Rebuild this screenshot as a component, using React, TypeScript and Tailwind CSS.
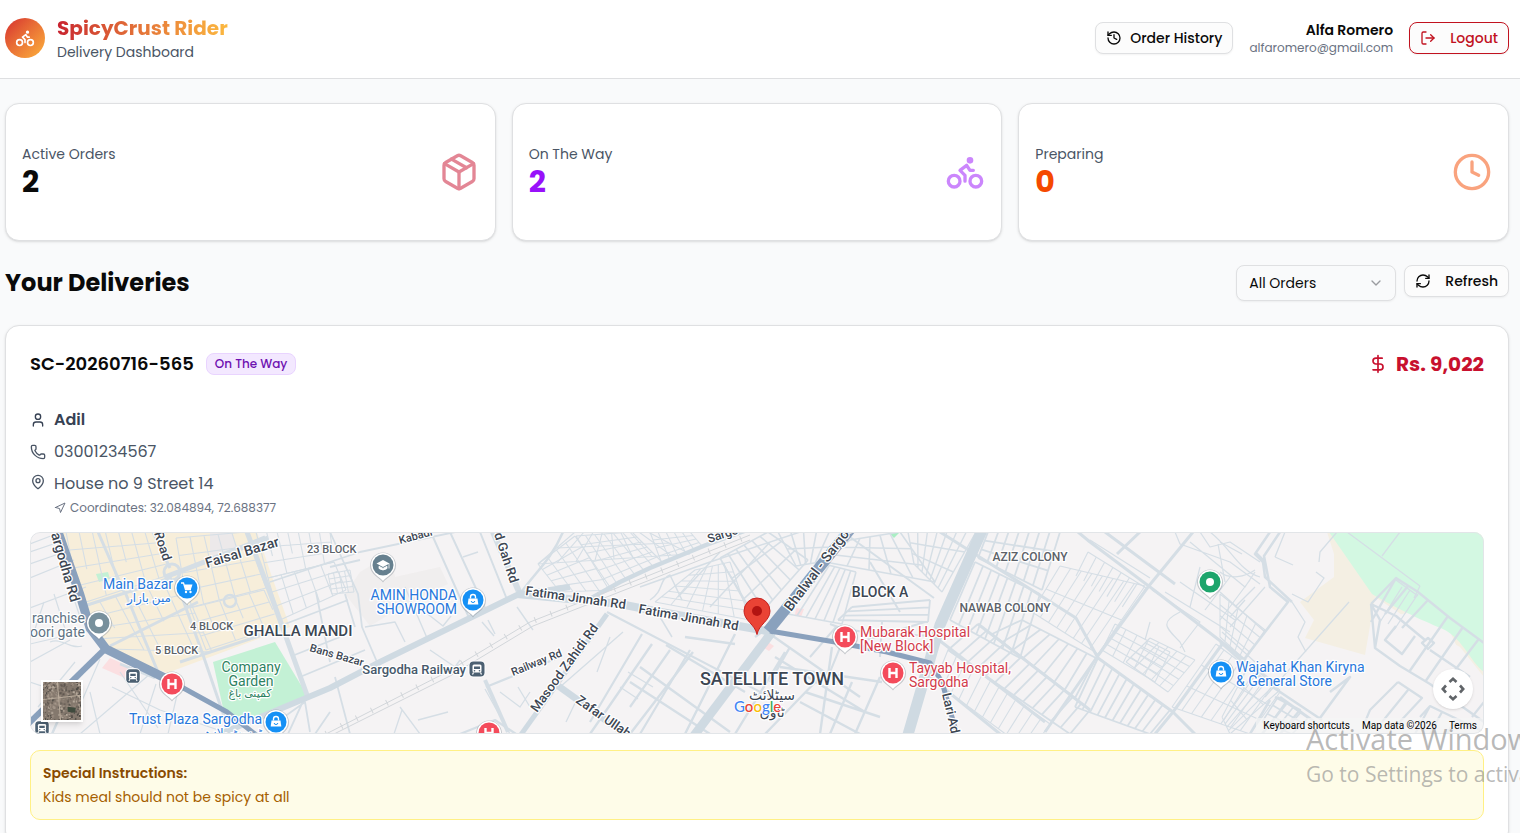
import React from "react";
import {
  Bike,
  ChevronDown,
  Clock,
  DollarSign,
  History,
  LogOut,
  MapPin,
  Navigation,
  Package,
  Phone,
  RefreshCw,
  User,
} from "lucide-react";

type Pt = [number, number];

const mix = (a: Pt, b: Pt, t: number): Pt => [a[0] + (b[0] - a[0]) * t, a[1] + (b[1] - a[1]) * t];

/* A block of streets: `across` lines join a-b to d-c, `along` lines join a-d to b-c. */
function Streets({ q, across, along, w = 1.1, skip = 0 }: { q: [Pt, Pt, Pt, Pt]; across: number; along: number; w?: number; skip?: number }) {
  const [a, b, c, d] = q;
  let path = "";
  for (let i = 0; i <= across; i++) {
    const t = i / across;
    const cut = skip && i % skip === 1 ? 0.55 : 1;
    const s = mix(a, b, t);
    const e = mix(s, mix(d, c, t), cut);
    path += `M${s[0].toFixed(1)} ${s[1].toFixed(1)}L${e[0].toFixed(1)} ${e[1].toFixed(1)}`;
  }
  for (let i = 0; i <= along; i++) {
    const t = along ? i / along : 0;
    const s = mix(a, d, t);
    const e = mix(b, c, t);
    path += `M${s[0].toFixed(1)} ${s[1].toFixed(1)}L${e[0].toFixed(1)} ${e[1].toFixed(1)}`;
  }
  return <path d={path} strokeWidth={w} />;
}

function Label({
  x,
  y,
  size = 14,
  fill = "#3c4653",
  weight = 400,
  rotate = 0,
  anchor = "start",
  children,
}: {
  x: number;
  y: number;
  size?: number;
  fill?: string;
  weight?: number;
  rotate?: number;
  anchor?: "start" | "middle" | "end";
  children: React.ReactNode;
}) {
  return (
    <text
      x={x}
      y={y}
      fontSize={size}
      fontWeight={weight}
      fill={fill}
      textAnchor={anchor}
      transform={rotate ? `rotate(${rotate} ${x} ${y})` : undefined}
      stroke="#ffffff"
      strokeWidth={2.5}
      strokeLinejoin="round"
      paintOrder="stroke"
    >
      {children}
    </text>
  );
}

function Pin({ x, y, color, children }: { x: number; y: number; color: string; children?: React.ReactNode }) {
  return (
    <g transform={`translate(${x} ${y})`}>
      <path d="M0 17.500C-3 13-13 9.500-13 .5A13 13 0 0 1 13 .5C13 9.500 3 13 0 17.500Z" fill="#7d8790" opacity="0.4" />
      <path d="M0 16C-3 12-12 8.500-12 0A12 12 0 0 1 12 0C12 8.500 3 12 0 16Z" fill="#ffffff" />
      <circle r="10.500" fill={color} />
      {children}
    </g>
  );
}

const bag = (
  <g>
    <path d="M-4.500-1.500h9l.8 6h-10.600z" fill="#fff" />
    <path d="M-2.500-1.500v-1.500a2.500 2.500 0 0 1 5 0v1.500" fill="none" stroke="#fff" strokeWidth="1.400" />
    <path d="M-1.800 1a1.800 1.500 0 0 0 3.600 0" fill="none" stroke="#1590f5" strokeWidth="1" />
  </g>
);
const hospital = <path d="M-3.500-5v10M3.500-5v10M-3.500 0h7" stroke="#fff" strokeWidth="2.400" fill="none" />;

function Station({ x, y, s = 1 }: { x: number; y: number; s?: number }) {
  return (
    <g transform={`translate(${x} ${y}) scale(${s})`}>
      <rect x="-8.500" y="-8.500" width="17" height="17" rx="5" fill="#fff" />
      <rect x="-7.500" y="-7.500" width="15" height="15" rx="4" fill="#4c6072" />
      <rect x="-4.500" y="-4.500" width="9" height="8" rx="1.500" fill="#fff" />
      <path d="M-3-2.500h6v2.500h-6z" fill="#4c6072" />
      <circle cx="-2.500" cy="1.800" r=".8" fill="#4c6072" />
      <circle cx="2.500" cy="1.800" r=".8" fill="#4c6072" />
      <path d="M-3.500 3.500l-1 2M3.500 3.500l1 2" stroke="#fff" strokeWidth="1.200" />
    </g>
  );
}

function CityMap() {
  return (
    <svg
      viewBox="0 0 1454 202"
      preserveAspectRatio="xMidYMid slice"
      className="block h-full w-full font-[Roboto,'DejaVu_Sans',sans-serif]"
      role="img"
      aria-label="Delivery location map"
    >
      <rect width="1454" height="202" fill="#f5f3f4" />

      {/* land use */}
      <path d="M30 0H227L242 45 260 95 180 125 137 141 74 116 57 75 42 30Z" fill="#f7eeda" />
      <path d="M180 0h22l8 24-18 6-12-8z" fill="#ece9ea" />
      <path d="M183 130L245 110 277 163 230 183 208 192 193 176Z" fill="#c3f1d5" />
      <path d="M66 42l12-2 2 7-11 3z" fill="#c3f1d5" />
      <path d="M80 126L103 136 97 147 72 136Z" fill="#fbdfe1" />
      <path d="M330 40L360 22 365 45 410 35 418 52 380 70 340 94 315 62Z" fill="#f0eeee" />
      <path d="M766 76l8 1-3 8-6-2zM738 110l6 4-5 5-5-3z" fill="#fbdfe1" />
      <path d="M858 0h12l-6 6z" fill="#aaeec4" />
      <path d="M1297 0H1454V145L1430 115 1380 88 1345 65 1335 123 1275 106 1284 88 1270 70 1304 45 1304 22Z" fill="#f4efe3" />
      <path d="M1352 92a40 30 0 0 1 70 12l20 44-50 4-40-30z" fill="#f5f3f4" />
      <path d="M1299 0H1454V140C1440 130 1432 103 1408 95C1385 85 1370 78 1342 62Z" fill="#d3f8e2" />

      <g fill="none" stroke="#d5dee5" strokeLinecap="butt" strokeLinejoin="round">
        {/* western edge */}
        <path d="M0 20L35 8M0 32L40 18M0 46L44 28M0 12L26 2M0 76L56 55M24 62l12 38M40 55l10 30M14 70l-10 30M0 112L60 98M20 110c12-5 20 8 32 4M8 175L45 130M70 127L48 178M0 130L40 108M50 202L120 142M82 155L130 178 200 202M110 202L126 152M138 202L150 150M60 160L70 202M90 140L128 196M0 150L30 160" strokeWidth="1.200" />
        <path d="M74 116L45 150 22 202M90 132l35 14" strokeWidth="2.500" />
        {/* bazaar blocks */}
        <Streets q={[[36, 0], [128, 0], [142, 42], [50, 72]]} across={7} along={4} skip={3} />
        <Streets q={[[54, 75], [148, 42], [182, 120], [80, 117]]} across={6} along={4} skip={3} />
        <Streets q={[[146, 6], [216, 0], [236, 56], [158, 76]]} across={5} along={4} />
        <Streets q={[[160, 76], [234, 58], [250, 94], [176, 118]]} across={5} along={3} skip={2} />
        <path d="M54 74L142 46M95 60L130 145M68 0L95 62M123 0L140 36M160 35L235 5M145 46L172 120 196 190M80 114L168 70M150 130L235 102" strokeWidth="3" />
        <path d="M135 45L238 6" strokeWidth="5" />
        <circle cx="142" cy="40" r="8" strokeWidth="3" />
        <circle cx="200" cy="69" r="6" strokeWidth="2.500" />
        <path d="M217 0L242 66 277 163" strokeWidth="5" />
        {/* 23 block */}
        <Streets q={[[226, 0], [300, 0], [304, 30], [238, 46]]} across={7} along={3} skip={2} />
        <Streets q={[[238, 46], [304, 30], [316, 58], [250, 88]]} across={5} along={3} />
        <path d="M240 50L330 20 425 0M255 92L318 68M262 124L310 105M270 145L335 118M275 165L258 202M300 180L285 202M305 145L320 202M240 195l35-25 5 30M300 0L328 62 332 95 347 130M286 60L300 130M300 35L330 28M315 62L325 95" strokeWidth="1.800" />
        <Streets q={[[298, 42], [320, 38], [324, 60], [302, 62]]} across={4} along={4} w={1} />
        {/* centre north */}
        <path d="M433 25l15-5M375 55L397 106M452 90l12 14M458 88l7 14M487 75L503 98M335 95l30-5 10 20M400 118L425 135 430 128M385 72l28 22 8-10" strokeWidth="1.400" />
        <path d="M403 5L440 88M420 0L455 76M450 0L478 70" strokeWidth="2" />
        <path d="M463 0L490 62" strokeWidth="6" />
        <path d="M490 62C505 40 520 30 533 0" strokeWidth="2.500" />
        <Streets q={[[545, 0], [618, 0], [660, 22], [508, 32]]} across={8} along={2} />
        <Streets q={[[508, 32], [545, 4], [582, 58], [530, 60]]} across={4} along={5} />
        <Streets q={[[546, 4], [602, 0], [632, 30], [578, 56]]} across={6} along={6} />
        <Streets q={[[620, 0], [660, 0], [672, 14], [632, 32]]} across={5} along={4} />
        {/* south centre */}
        <path d="M455 157L480 202M370 175L390 202M388 188l30-8M372 178l-8 24M470 160l20 15 10-15M488 155l12 20M593 100L530 155M598 140l25 15M590 155l18 12M548 165L536 190M567 140L580 105" strokeWidth="1.300" />
        <path d="M456 155L530 125M430 202L465 188 486 202M577 80L740 165M612 102L560 190M640 118L600 175M660 118L610 202" strokeWidth="2.200" />
        <path d="M455 148L478 200" strokeWidth="4" />
        {/* satellite town */}
        <path d="M610 135L700 200M636 113L715 160M655 105L705 112M600 150L680 202M663 120L600 202M705 102L655 202M725 105L760 80M740 102L830 165M755 120L705 202M750 135L852 150M760 115L740 150M802 115L790 202M745 125L835 180M795 140L735 202M822 150L800 202M850 145L825 202M775 160L850 185M770 170L830 202M622 112L560 202" strokeWidth="2.400" />
        <Streets q={[[665, 38], [700, 30], [720, 88], [625, 70]]} across={6} along={6} />
        <path d="M610 55L680 30 770 0M620 68c15-10 8-20 20-25l12 25M630 85l12 20M648 65L690 20M680 75L740 10M692 30L725 85" strokeWidth="1.500" />
        <Streets q={[[690, 26], [738, 0], [778, 28], [725, 88]]} across={6} along={3} w={1.6} />
        <Streets q={[[748, 0], [812, 0], [790, 30], [766, 34]]} across={5} along={2} w={1.6} />
        {/* block a */}
        <Streets q={[[820, 8], [870, 0], [905, 50], [795, 30]]} across={5} along={3} w={1.6} />
        <Streets q={[[794, 32], [826, 40], [812, 92], [758, 82]]} across={6} along={1} w={1.6} />
        <Streets q={[[878, 0], [946, 0], [912, 60], [884, 32]]} across={7} along={3} w={1.4} />
        <Streets q={[[822, 75], [900, 68], [898, 90], [808, 88]]} across={1} along={3} w={1.8} />
        <path d="M820 5L904 66M840 30L870 80M806 95L780 125M800 92C830 105 880 100 906 105M830 110L895 90M850 125L852 90M818 96L800 140" strokeWidth="2" />
        {/* aziz and nawab colony */}
        <Streets q={[[958, 0], [1030, 0], [1012, 58], [948, 26]]} across={7} along={3} w={1.8} />
        <Streets q={[[945, 30], [1010, 62], [990, 126], [920, 88]]} across={8} along={1} w={1.8} />
        <Streets q={[[1030, 34], [1115, 54], [1068, 122], [1002, 80]]} across={8} along={2} />
        <Streets q={[[1058, 20], [1116, 56], [1100, 80], [1046, 44]]} across={7} along={0} />
        <Streets q={[[948, 92], [1060, 178], [1040, 202], [918, 118]]} across={13} along={1} w={1.8} />
        <Streets q={[[992, 88], [1066, 126], [1045, 166], [962, 102]]} across={8} along={1} w={1.8} />
        <Streets q={[[918, 118], [1020, 192], [1000, 220], [905, 150]]} across={12} along={1} />
        <Streets q={[[1068, 126], [1140, 178], [1120, 202], [1045, 175]]} across={10} along={1} w={1.8} />
        <Streets q={[[1085, 92], [1140, 120], [1125, 150], [1072, 118]]} across={5} along={4} />
        <Streets q={[[1120, 106], [1165, 128], [1138, 160], [1096, 130]]} across={5} along={5} />
        <Streets q={[[1186, 112], [1250, 160], [1220, 202], [1142, 175]]} across={8} along={3} />
        <path d="M910 0L1046 86 1068 126 1143 180 1165 202M1048 0L1060 10 1120 55 1193 111 1240 148M1163 0L1118 55 1067 125 1015 200M1193 111L1143 180 1125 202M1075 0L1145 52M1087 22L1110 0M948 92L1060 178M905 105L1015 190M900 145L970 202" strokeWidth="3" />
        <path d="M1060 8L1120 46M1122 58L1170 90 1150 116M1120 90l-5 18M1150 80C1130 90 1135 95 1150 110L1155 120M1145 0L1150 12 1200 30 1230 52M1160 10L1215 55 1225 40M1135 60L1200 100M1150 50L1205 88M1170 35L1160 75M1188 12L1195 50M1175 78L1200 45M1190 88L1220 48M1200 95L1235 55M1180 0C1200 15 1210 40 1230 45M1170 0l10 15 20-5 30 20" strokeWidth="1.200" />
        {/* eastern outskirts */}
        <path d="M1240 0L1225 22 1233 30 1235 45 1262 70M1250 0L1234 24 1240 55 1258 70 1212 130M1225 20l10 10" strokeWidth="2.500" />
        <path d="M1190 40C1200 48 1215 45 1225 38M1190 10L1212 22M1245 25l18 8M1255 0L1245 25M1307 0L1290 20 1289 30M1286 40L1294 46 1278 70 1262 62M1319 70L1235 165M1262 70L1275 90 1268 105 1276 120M1190 60L1235 100M1192 100L1225 130M1205 75L1225 55M1200 85L1215 68" strokeWidth="1.300" />
        <Streets q={[[1190, 62], [1235, 98], [1215, 128], [1190, 105]]} across={5} along={4} />
        <Streets q={[[1218, 135], [1250, 158], [1200, 202], [1192, 185]]} across={5} along={3} />
        <path d="M1190 110L1235 150 1292 188M1290 186L1320 145 1300 160M1240 168L1220 202M1256 172L1232 202M1245 165L1270 178 1250 202M1250 165L1285 190" strokeWidth="2.500" />
        <Streets q={[[1248, 165], [1278, 186], [1262, 202], [1232, 190]]} across={4} along={3} w={1.6} />
        <path d="M1317 0L1390 54M1352 24L1370 0M1390 54l-6 12M1366 48L1388 64M1372 55L1350 90M1380 58L1358 92M1388 62L1364 98" strokeWidth="1.300" />
        <path d="M1341 72L1350 88 1345 116 1370 134 1400 152 1454 190M1341 72L1366 46 1388 60 1420 86 1454 111M1341 72L1366 84 1395 108M1366 46L1341 90M1378 54L1355 82M1398 68L1372 96M1418 84L1379 140M1433 95L1395 150M1448 108L1410 158M1341 72L1345 116M1366 94L1355 108 1372 122 1385 104M1400 118L1440 145" strokeWidth="2.400" />
        <path d="M1398 106l6 5-6 6-6-6z" strokeWidth="2.400" />
        <path d="M1368 150L1340 178 1335 190M1368 150L1392 166 1365 195M1378 158L1352 190M1390 185L1400 174 1454 200M1400 174l-15 28M1412 180l-12 22M1425 188l-8 14M1442 185L1454 170" strokeWidth="2.200" />
        {/* collector roads */}
        <path d="M190 202L300 156 350 130 487 63 540 55" stroke="#cfdae2" strokeWidth="6" />
        <path d="M558 68L590 50 620 36 676 13 725 -5" stroke="#cfdae2" strokeWidth="4.500" />
        <path d="M487 62L590 72 620 78 720 96 742 100" stroke="#cfdae2" strokeWidth="8" />
        <path d="M742 100L663 205" stroke="#cfdae2" strokeWidth="9" />
        <path d="M577 82L490 204" stroke="#cfdae2" strokeWidth="5" />
        <path d="M527 153L606 210" stroke="#cfdae2" strokeWidth="7" />
        <path d="M953 -4L910 93 877 206" stroke="#cfdae2" strokeWidth="11" />
      </g>

      {/* railway */}
      <g fill="none" stroke="#d2d6da">
        <path d="M296 202L417 140 500 90 620 43 720 3" strokeWidth="1" />
        <path d="M300 204L420 144 503 94 620 48 720 8" strokeWidth="1" />
        <path d="M296 202L417 140 500 90 620 43 720 3" strokeWidth="6" strokeDasharray="1 16" />
      </g>

      {/* highways */}
      <g fill="none" stroke="#8aa1bd" strokeLinejoin="round">
        <path d="M27 -3L50 63 60 96 76 117 137 147" strokeWidth="9" />
        <path d="M137 147L197 180 230 206" strokeWidth="5" />
        <path d="M76 116L-3 193" strokeWidth="6" />
        <path d="M738 99L822 -5" strokeWidth="11" />
        <path d="M740 99L805 110 857 120 900 131 912 150 928 206" strokeWidth="5" />
      </g>

      {/* road names */}
      <Label x={21} y={2} size={14} weight={500} rotate={74}>argodha Rd</Label>
      <Label x={124} y={1} size={13} weight={500} rotate={72}>Road</Label>
      <Label x={177} y={36} size={14} weight={500} rotate={-17}>Faisal Bazar</Label>
      <Label x={370} y={12} size={11} weight={500} rotate={-15}>Kabadi</Label>
      <Label x={464} y={2} size={13} weight={500} rotate={72}>d Gah Rd</Label>
      <Label x={495} y={63} size={13} weight={500} rotate={8}>Fatima Jinnah Rd</Label>
      <Label x={608} y={81} size={13} weight={500} rotate={10}>Fatima Jinnah Rd</Label>
      <Label x={279} y={119} size={11} weight={500} rotate={16}>Bans Bazar</Label>
      <Label x={483} y={144} size={11} weight={500} rotate={-22}>Railway Rd</Label>
      <Label x={507} y={181} size={13} weight={500} rotate={-54}>Masood Zahidi Rd</Label>
      <Label x={545} y={170} size={13} weight={500} rotate={35}>Zafar Ullah</Label>
      <Label x={679} y={11} size={12} weight={500} rotate={-18}>Sargo</Label>
      <Label x={761} y={80} size={14} weight={500} rotate={-53}>Bhalwal - Sargodha</Label>
      <Label x={912} y={162} size={13} weight={500} rotate={77}>Lari Adda</Label>

      {/* districts */}
      <Label x={277} y={21} size={11} weight={500} fill="#5b6168">23 BLOCK</Label>
      <Label x={160} y={98} size={11} weight={500} fill="#5b6168">4 BLOCK</Label>
      <Label x={125} y={122} size={11} weight={500} fill="#5b6168">5 BLOCK</Label>
      <Label x={268} y={104} size={15} weight={500} anchor="middle">GHALLA MANDI</Label>
      <Label x={850} y={65} size={14} weight={500} anchor="middle">BLOCK A</Label>
      <Label x={1000} y={29} size={12} weight={500} anchor="middle" fill="#5b6168">AZIZ COLONY</Label>
      <Label x={975} y={80} size={12} weight={500} anchor="middle" fill="#5b6168">NAWAB COLONY</Label>
      <Label x={742} y={153} size={18} weight={500} anchor="middle">SATELLITE TOWN</Label>
      <Label x={742} y={168} size={14} anchor="middle">سیٹلائٹ</Label>
      <Label x={742} y={185} size={14} anchor="middle">ٹاؤن</Label>

      {/* places */}
      <Label x={143} y={57} anchor="end" fill="#2878dc">Main Bazar</Label>
      <Label x={141} y={70} size={12} anchor="end" fill="#2878dc">مین بازار</Label>
      <Label x={55} y={91} anchor="end" fill="#607384">ranchise</Label>
      <Label x={55} y={105} anchor="end" fill="#607384">oori gate</Label>
      <Label x={221} y={140} anchor="middle" fill="#2d8261">Company</Label>
      <Label x={221} y={154} anchor="middle" fill="#2d8261">Garden</Label>
      <Label x={220} y={165} size={11} anchor="middle" fill="#2d8261">کمپنی باغ</Label>
      <Label x={232} y={192} anchor="end" fill="#2878dc">Trust Plaza Sargodha</Label>
      <Label x={232} y={205} size={12} anchor="end" fill="#2878dc">ٹرسٹ پلازہ</Label>
      <Label x={427} y={68} anchor="end" fill="#2878dc">AMIN HONDA</Label>
      <Label x={427} y={82} anchor="end" fill="#2878dc">SHOWROOM</Label>
      <Label x={436} y={142} size={13} weight={500} anchor="end" fill="#46586a">Sargodha Railway</Label>
      <Label x={830} y={105} fill="#d23b4b">Mubarak Hospital</Label>
      <Label x={830} y={119} fill="#d23b4b">[New Block]</Label>
      <Label x={879} y={141} fill="#d23b4b">Tayyab Hospital,</Label>
      <Label x={879} y={155} fill="#d23b4b">Sargodha</Label>
      <Label x={1206} y={140} fill="#2878dc">Wajahat Khan Kiryna</Label>
      <Label x={1206} y={154} fill="#2878dc">&amp; General Store</Label>

      <Pin x={157} y={56} color="#1590f5">
        <path d="M-6-5h2.500l2 6.500h5.500" stroke="#fff" strokeWidth="1.300" fill="none" />
        <path d="M-2.800-3.500h8.300l-1.500 4.500h-5.500z" fill="#fff" />
        <circle cx="-1" cy="4" r="1.200" fill="#fff" />
        <circle cx="3.500" cy="4" r="1.200" fill="#fff" />
      </Pin>
      <Pin x={69} y={91} color="#78909c">
        <circle r="4" fill="#fff" />
      </Pin>
      <Pin x={142} y={152} color="#f44b5b">{hospital}</Pin>
      <Pin x={246} y={190} color="#1590f5">{bag}</Pin>
      <Pin x={353} y={33} color="#66808f">
        <path d="M0-5L6.500-1.500 0 2-6.500-1.500Z" fill="#fff" />
        <path d="M-4 1.200v2.300q4 3 8 0v-2.300l-4 2.200zM6-1.500v5" fill="#fff" stroke="#fff" strokeWidth=".8" />
      </Pin>
      <Pin x={443} y={68} color="#1590f5">{bag}</Pin>
      <Pin x={459} y={201} color="#f44b5b">{hospital}</Pin>
      <Pin x={815} y={105} color="#f44b5b">{hospital}</Pin>
      <Pin x={863} y={141} color="#f44b5b">{hospital}</Pin>
      <Pin x={1180} y={50} color="#1da56c">
        <circle r="4" fill="#fff" />
      </Pin>
      <Pin x={1191} y={140} color="#1590f5">{bag}</Pin>
      <Station x={447} y={137} />
      <Station x={103} y={144} s={0.9} />
      <Station x={12} y={196} s={0.9} />

      {/* delivery marker */}
      <path
        d="M727 102.500C725 92 714 89 714 79A13 13 0 0 1 740 79C740 89 729 92 727 102.500Z"
        fill="#ea4335"
        stroke="#c5221f"
        strokeWidth="1"
      />
      <circle cx="727" cy="79" r="5" fill="#b31412" />

      {/* provider name */}
      <text x="704" y="180" fontSize="15" fontWeight="500" className="font-[Lato,sans-serif]" stroke="#fff" strokeWidth="1.500" paintOrder="stroke">
        <tspan fill="#4285f4">G</tspan>
        <tspan fill="#ea4335">o</tspan>
        <tspan fill="#fbbc04">o</tspan>
        <tspan fill="#4285f4">g</tspan>
        <tspan fill="#34a853">l</tspan>
        <tspan fill="#ea4335">e</tspan>
      </text>
    </svg>
  );
}

/* Small aerial-view preview used as the map type switch. */
function AerialPreview() {
  const specks: React.ReactNode[] = [];
  const tones = ["#5f564f", "#a5978a", "#6f665d", "#b3a799", "#4d4a45", "#94867a"];
  let seed = 7;
  const next = (n: number) => {
    seed = (seed * 1103 + 12345) % 65521;
    return seed % n;
  };
  for (let i = 0; i < 330; i++) {
    specks.push(<rect key={i} x={next(37)} y={next(37)} width={1 + next(2)} height={1 + next(2)} fill={tones[next(6)]} />);
  }
  return (
    <svg viewBox="0 0 37 37" className="block h-full w-full" aria-hidden="true">
      <rect width="37" height="37" fill="#84786d" />
      {specks}
      <path d="M0 17L37 13M14 0L17 37" stroke="#b9ab9b" strokeWidth="1" fill="none" />
      <path d="M24 24l8 1-1 5-7-1z" fill="#3f4a3d" />
    </svg>
  );
}

function StatCard({ label, value, valueClass, icon }: { label: string; value: number; valueClass: string; icon: React.ReactNode }) {
  return (
    <section className="flex items-center justify-between rounded-[14px] border border-[#dfe0e2] bg-white px-4 py-10 shadow-sm">
      <div>
        <p className="text-sm leading-5 text-[#4a5565]">{label}</p>
        <p className={`text-[30px] font-bold leading-9 ${valueClass}`}>{value}</p>
      </div>
      {icon}
    </section>
  );
}

export default function App() {
  return (
    <div className="relative h-screen overflow-hidden bg-[#f9fafb] font-[Poppins,Inter,sans-serif] text-[#0a0a0a]">
      <header className="flex items-center justify-between border-b border-[#dedfe1] bg-white pt-[14px] pr-[11px] pb-4 pl-[5px]">
        <div className="flex items-center gap-3">
          <div className="flex size-10 items-center justify-center rounded-full bg-gradient-to-br from-[#d5282f] to-[#fbb03b] text-white">
            <Bike size={20} />
          </div>
          <div>
            <h1 className="bg-gradient-to-r from-[#c8202f] to-[#fbb83f] bg-clip-text text-xl font-bold leading-7 text-transparent">
              SpicyCrust Rider
            </h1>
            <p className="text-sm leading-5 text-[#4a5565]">Delivery Dashboard</p>
          </div>
        </div>
        <div className="flex items-center gap-4">
          <button type="button" className="flex h-8 items-center gap-2 rounded-lg border border-[#dfe0e2] bg-[#fcfcfc] px-[10px] text-sm font-medium shadow-xs">
            <History size={16} />
            Order History
          </button>
          <div className="text-right">
            <p className="text-sm font-semibold leading-5">Alfa Romero</p>
            <p className="text-xs leading-4 text-[#6a7282]">alfaromero@gmail.com</p>
          </div>
          <button type="button" className="flex h-8 items-center gap-[14px] rounded-lg border border-[#c1121f] bg-[#fcfcfc] px-[10px] text-sm font-medium text-[#c1121f] shadow-xs">
            <LogOut size={16} />
            Logout
          </button>
        </div>
      </header>

      <main className="pt-6 pr-[11px] pl-[5px]">
        <div className="grid grid-cols-3 gap-4">
          <StatCard label="Active Orders" value={2} valueClass="text-[#0a0a0a]" icon={<Package size={40} className="text-[#c8102e] opacity-50" />} />
          <StatCard label="On The Way" value={2} valueClass="text-[#9810fa]" icon={<Bike size={40} className="text-[#9810fa] opacity-50" />} />
          <StatCard label="Preparing" value={0} valueClass="text-[#f54900]" icon={<Clock size={40} className="text-[#f54900] opacity-50" />} />
        </div>

        <div className="mt-6 flex items-center justify-between">
          <h2 className="text-2xl font-bold">Your Deliveries</h2>
          <div className="flex items-start gap-2">
            <div className="relative">
              <select
                aria-label="Filter orders"
                className="h-9 w-40 appearance-none rounded-lg border border-[#dfe0e2] bg-[#f9fafb] px-3 text-sm shadow-xs"
                defaultValue="all"
              >
                <option value="all">All Orders</option>
              </select>
              <ChevronDown size={16} className="pointer-events-none absolute top-[10px] right-3 text-[#9a9ca0]" />
            </div>
            <button type="button" className="flex h-8 items-center gap-[14px] rounded-lg border border-[#dfe0e2] bg-[#fcfcfc] px-[10px] text-sm font-medium shadow-xs">
              <RefreshCw size={16} />
              Refresh
            </button>
          </div>
        </div>

        <article className="mt-6 rounded-[14px] border border-[#dfe0e2] bg-white p-6 shadow-sm">
          <div className="flex h-7 items-center justify-between">
            <div className="flex items-center gap-3">
              <h3 className="text-lg font-semibold">SC-20260716-565</h3>
              <span className="rounded-lg border border-[#e9d4ff] bg-[#f3e8ff] px-2 py-0.5 text-xs font-medium text-[#6e11b0]">On The Way</span>
            </div>
            <p className="flex items-center gap-2 text-xl font-bold text-[#c8102e]">
              <DollarSign size={20} />
              Rs. 9,022
            </p>
          </div>

          <div className="mt-[30px] flex flex-col gap-2 leading-6 text-[#4a5565]">
            <p className="flex items-center gap-2 font-semibold text-[#364153]">
              <User size={16} />
              Adil
            </p>
            <p className="flex items-center gap-2">
              <Phone size={16} />
              03001234567
            </p>
            <div className="flex items-start gap-2">
              <MapPin size={16} className="mt-0.5" />
              <div>
                <p>House no 9 Street 14</p>
                <p className="mt-1 flex items-center gap-1 text-xs text-[#6a7282]">
                  <Navigation size={12} />
                  Coordinates: 32.084894, 72.688377
                </p>
              </div>
            </div>
          </div>

          <div className="relative mt-4 h-[202px] overflow-hidden rounded-[10px]">
            <CityMap />
            <button type="button" aria-label="Show satellite imagery" className="absolute bottom-3 left-[11px] size-[42px] border-2 border-white shadow-md">
              <AerialPreview />
            </button>
            <button type="button" aria-label="Map camera controls" className="absolute right-[11px] bottom-[25px] flex size-10 items-center justify-center rounded-full bg-white shadow">
              <svg viewBox="0 0 24 24" className="size-6" fill="none" stroke="#606468" strokeWidth="2.600" aria-hidden="true">
                <path d="M8.500 5L12 1.800 15.500 5M8.500 19L12 22.200 15.500 19M5 8.500L1.800 12 5 15.500M19 8.500L22.200 12 19 15.500" />
              </svg>
            </button>
            <div className="absolute right-0 bottom-0 flex gap-3 bg-[#f5f5f5]/70 px-[7px] font-[Roboto,sans-serif] text-[10px] leading-4 text-black">
              <button type="button">Keyboard shortcuts</button>
              <span>Map data ©2026</span>
              <a href="#terms">Terms</a>
            </div>
            <div className="pointer-events-none absolute inset-0 rounded-[10px] border border-[#e2e5e8]" />
          </div>

          <div className="mt-4 rounded-[10px] border border-[#fff085] bg-[#fefce8] p-3 text-sm leading-5">
            <p className="font-semibold text-[#894b00]">Special Instructions:</p>
            <p className="mt-1 text-[#a65f00]">Kids meal should not be spicy at all</p>
          </div>
        </article>
      </main>

      <div className="pointer-events-none absolute top-[719px] right-0 w-[214px] overflow-hidden font-['Open_Sans',sans-serif] whitespace-nowrap text-[#8a8a8a]/60">
        <p className="text-[29px] leading-10">Activate Windows</p>
        <p className="text-[21px] leading-[30px]">Go to Settings to activate Windows.</p>
      </div>
    </div>
  );
}
